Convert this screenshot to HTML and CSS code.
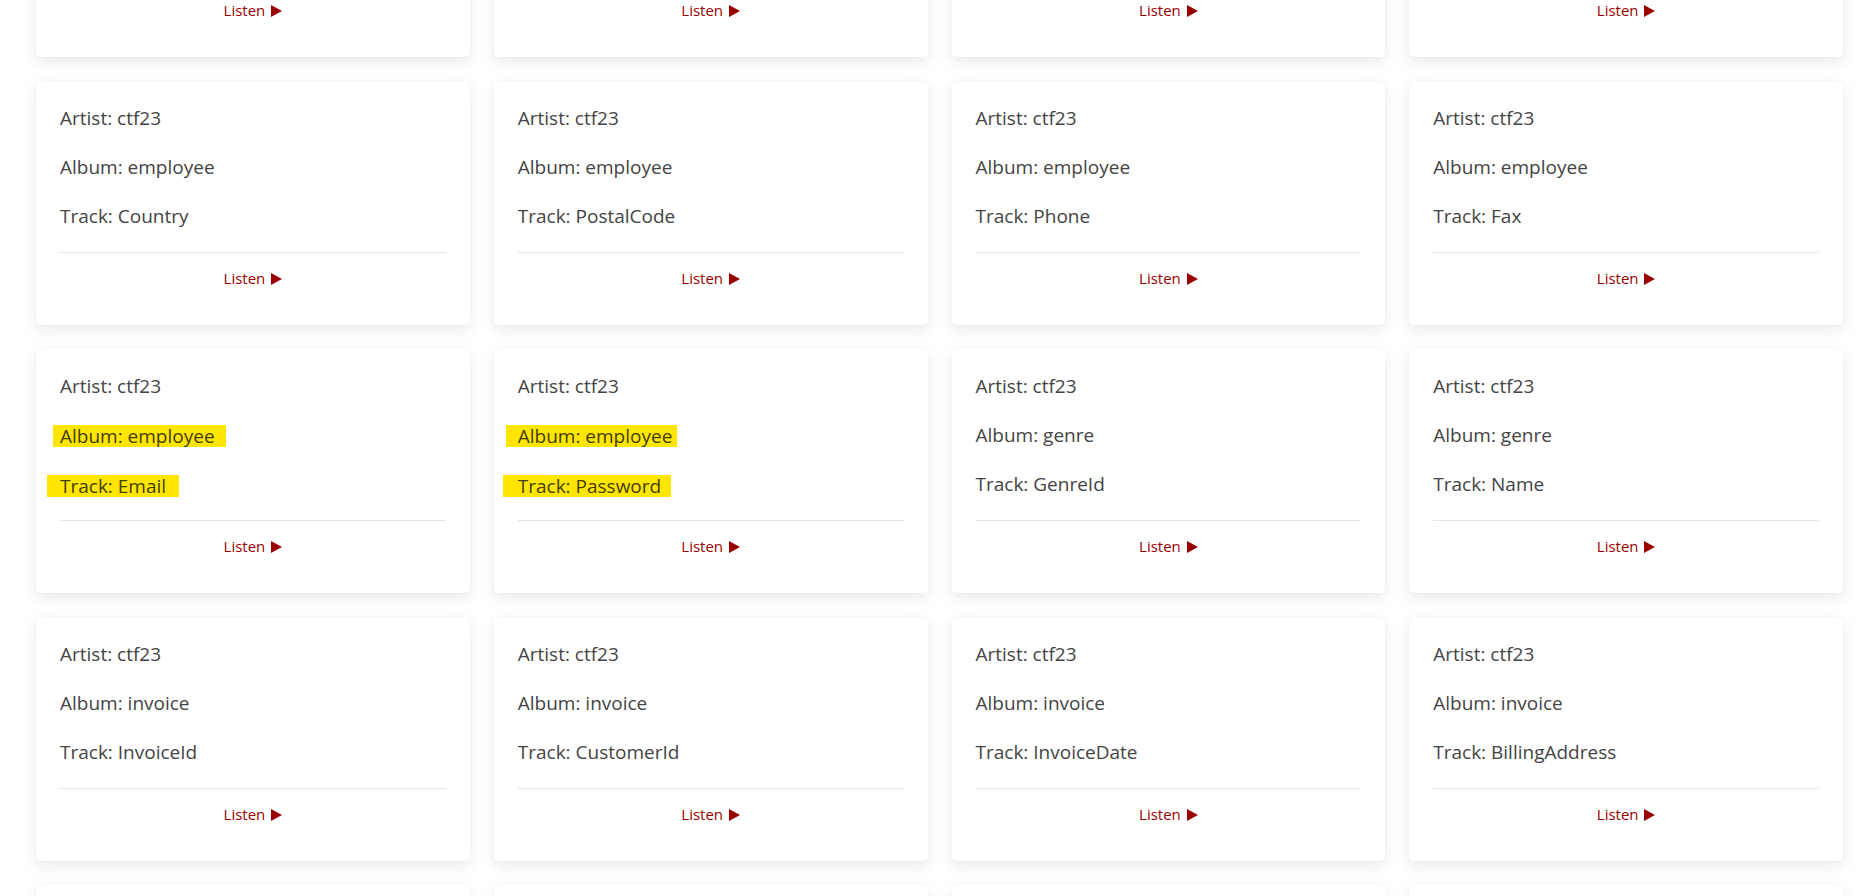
FILE: index.html
```html
<!DOCTYPE html>
<html lang="en">
<head>
<meta charset="utf-8">
<title>Tracks</title>
<link rel="stylesheet" href="styles.css">
</head>
<body>
<main class="page">
  <section class="grid">
    <!-- row 1 -->
    <article class="card"><div class="card-body"><p>Artist: ctf23</p><p>Album: employee</p><p>Track: HireDate</p></div><div class="card-footer"><a class="listen" href="#">Listen <svg class="play" viewBox="0 0 11 12"><path d="M0 0L11 6L0 12Z"/></svg></a></div></article>
    <article class="card"><div class="card-body"><p>Artist: ctf23</p><p>Album: employee</p><p>Track: Address</p></div><div class="card-footer"><a class="listen" href="#">Listen <svg class="play" viewBox="0 0 11 12"><path d="M0 0L11 6L0 12Z"/></svg></a></div></article>
    <article class="card"><div class="card-body"><p>Artist: ctf23</p><p>Album: employee</p><p>Track: City</p></div><div class="card-footer"><a class="listen" href="#">Listen <svg class="play" viewBox="0 0 11 12"><path d="M0 0L11 6L0 12Z"/></svg></a></div></article>
    <article class="card"><div class="card-body"><p>Artist: ctf23</p><p>Album: employee</p><p>Track: State</p></div><div class="card-footer"><a class="listen" href="#">Listen <svg class="play" viewBox="0 0 11 12"><path d="M0 0L11 6L0 12Z"/></svg></a></div></article>
    <!-- row 2 -->
    <article class="card"><div class="card-body"><p>Artist: ctf23</p><p>Album: employee</p><p>Track: Country</p></div><div class="card-footer"><a class="listen" href="#">Listen <svg class="play" viewBox="0 0 11 12"><path d="M0 0L11 6L0 12Z"/></svg></a></div></article>
    <article class="card"><div class="card-body"><p>Artist: ctf23</p><p>Album: employee</p><p>Track: PostalCode</p></div><div class="card-footer"><a class="listen" href="#">Listen <svg class="play" viewBox="0 0 11 12"><path d="M0 0L11 6L0 12Z"/></svg></a></div></article>
    <article class="card"><div class="card-body"><p>Artist: ctf23</p><p>Album: employee</p><p>Track: Phone</p></div><div class="card-footer"><a class="listen" href="#">Listen <svg class="play" viewBox="0 0 11 12"><path d="M0 0L11 6L0 12Z"/></svg></a></div></article>
    <article class="card"><div class="card-body"><p>Artist: ctf23</p><p>Album: employee</p><p>Track: Fax</p></div><div class="card-footer"><a class="listen" href="#">Listen <svg class="play" viewBox="0 0 11 12"><path d="M0 0L11 6L0 12Z"/></svg></a></div></article>
    <!-- row 3 -->
    <article class="card"><div class="card-body"><p>Artist: ctf23</p><p><span class="hl hl-album hl-a1">Album: employee</span></p><p><span class="hl hl-track hl-t1">Track: Email</span></p></div><div class="card-footer"><a class="listen" href="#">Listen <svg class="play" viewBox="0 0 11 12"><path d="M0 0L11 6L0 12Z"/></svg></a></div></article>
    <article class="card"><div class="card-body"><p>Artist: ctf23</p><p><span class="hl hl-album hl-a2">Album: employee</span></p><p><span class="hl hl-track hl-t2">Track: Password</span></p></div><div class="card-footer"><a class="listen" href="#">Listen <svg class="play" viewBox="0 0 11 12"><path d="M0 0L11 6L0 12Z"/></svg></a></div></article>
    <article class="card"><div class="card-body"><p>Artist: ctf23</p><p>Album: genre</p><p>Track: GenreId</p></div><div class="card-footer"><a class="listen" href="#">Listen <svg class="play" viewBox="0 0 11 12"><path d="M0 0L11 6L0 12Z"/></svg></a></div></article>
    <article class="card"><div class="card-body"><p>Artist: ctf23</p><p>Album: genre</p><p>Track: Name</p></div><div class="card-footer"><a class="listen" href="#">Listen <svg class="play" viewBox="0 0 11 12"><path d="M0 0L11 6L0 12Z"/></svg></a></div></article>
    <!-- row 4 -->
    <article class="card"><div class="card-body"><p>Artist: ctf23</p><p>Album: invoice</p><p>Track: InvoiceId</p></div><div class="card-footer"><a class="listen" href="#">Listen <svg class="play" viewBox="0 0 11 12"><path d="M0 0L11 6L0 12Z"/></svg></a></div></article>
    <article class="card"><div class="card-body"><p>Artist: ctf23</p><p>Album: invoice</p><p>Track: CustomerId</p></div><div class="card-footer"><a class="listen" href="#">Listen <svg class="play" viewBox="0 0 11 12"><path d="M0 0L11 6L0 12Z"/></svg></a></div></article>
    <article class="card"><div class="card-body"><p>Artist: ctf23</p><p>Album: invoice</p><p>Track: InvoiceDate</p></div><div class="card-footer"><a class="listen" href="#">Listen <svg class="play" viewBox="0 0 11 12"><path d="M0 0L11 6L0 12Z"/></svg></a></div></article>
    <article class="card"><div class="card-body"><p>Artist: ctf23</p><p>Album: invoice</p><p>Track: BillingAddress</p></div><div class="card-footer"><a class="listen" href="#">Listen <svg class="play" viewBox="0 0 11 12"><path d="M0 0L11 6L0 12Z"/></svg></a></div></article>
    <!-- row 5 -->
    <article class="card"><div class="card-body"><p>Artist: ctf23</p><p>Album: invoice</p><p>Track: BillingCity</p></div><div class="card-footer"><a class="listen" href="#">Listen <svg class="play" viewBox="0 0 11 12"><path d="M0 0L11 6L0 12Z"/></svg></a></div></article>
    <article class="card"><div class="card-body"><p>Artist: ctf23</p><p>Album: invoice</p><p>Track: BillingState</p></div><div class="card-footer"><a class="listen" href="#">Listen <svg class="play" viewBox="0 0 11 12"><path d="M0 0L11 6L0 12Z"/></svg></a></div></article>
    <article class="card"><div class="card-body"><p>Artist: ctf23</p><p>Album: invoice</p><p>Track: BillingCountry</p></div><div class="card-footer"><a class="listen" href="#">Listen <svg class="play" viewBox="0 0 11 12"><path d="M0 0L11 6L0 12Z"/></svg></a></div></article>
    <article class="card"><div class="card-body"><p>Artist: ctf23</p><p>Album: invoice</p><p>Track: BillingPostalCode</p></div><div class="card-footer"><a class="listen" href="#">Listen <svg class="play" viewBox="0 0 11 12"><path d="M0 0L11 6L0 12Z"/></svg></a></div></article>
  </section>
</main>
</body>
</html>
```
FILE: styles.css
```css
html, body {
  margin: 0;
  padding: 0;
  background: #ffffff;
  overflow: hidden;
  height: 896px;
}

body {
  font-family: "Open Sans", "Noto Sans", "Liberation Sans", sans-serif;
  color: #444444;
}

.page {
  padding: 0 33px 0 36px;
}

.grid {
  display: grid;
  grid-template-columns: repeat(4, 1fr);
  column-gap: 24px;
  row-gap: 24px;
  margin-top: -187px;
}

.card {
  background: #ffffff;
  border-radius: 5px;
  box-shadow: 0 5px 16px rgba(0, 0, 0, 0.09), 0 0 3px rgba(0, 0, 0, 0.03);
  height: 244px;
  box-sizing: border-box;
  display: flex;
  flex-direction: column;
}

.card-body {
  padding: 23px 24px 0;
}

.card-body p {
  margin: 0 0 20px;
  font-size: 19px;
  line-height: 29px;
  white-space: nowrap;
}

.card-body p:last-child {
  margin-bottom: 0;
}

.card-footer {
  margin: 21px 24px 0;
  border-top: 1px solid #e6e6e6;
  padding-top: 14px;
  text-align: center;
}

.listen {
  font-size: 15px;
  line-height: 20px;
  color: #990000;
  text-decoration: none;
  white-space: nowrap;
}

.play {
  width: 11px;
  height: 12px;
  margin-left: 2px;
  vertical-align: -1px;
  fill: #990000;
}

.hl {
  display: inline-block;
  height: 22px;
  line-height: 22px;
  background: #ffe600;
  color: #443d00;
}

.hl-album {
  vertical-align: -1px;
}

.hl-track {
  vertical-align: -2px;
}

.hl-a1 {
  margin-left: -7px;
  padding: 0 11px 0 7px;
}

.hl-t1 {
  margin-left: -13px;
  padding: 0 13px 0 13px;
}

.hl-a2 {
  margin-left: -12px;
  padding: 0 5px 0 12px;
}

.hl-t2 {
  margin-left: -15px;
  padding: 0 10px 0 15px;
}
```
